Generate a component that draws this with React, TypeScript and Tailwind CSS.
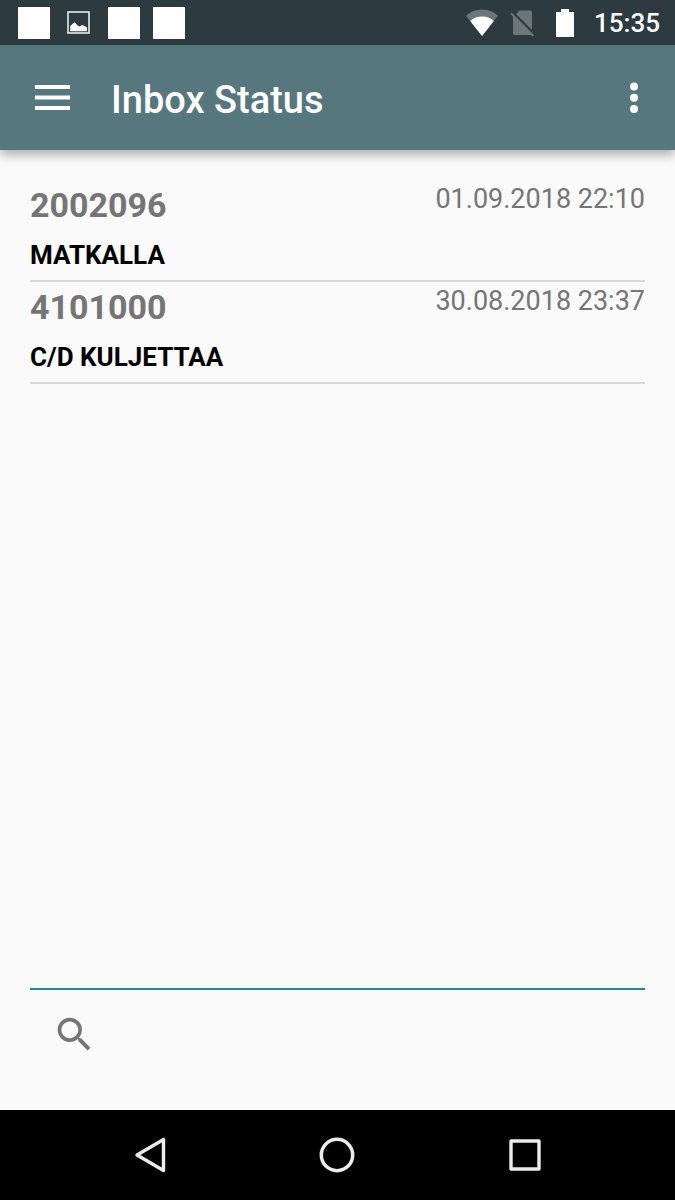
type Message = {
    id: string;
    date: string;
    status: string;
};

const messages: Message[] = [
    { id: "2002096", date: "01.09.2018 22:10", status: "MATKALLA" },
    { id: "4101000", date: "30.08.2018 23:37", status: "C/D KULJETTAA" },
];

function StatusBar() {
    return (
        <div className="flex h-[45px] items-center justify-between bg-[#2d3b40] pr-[15px] pl-[18px] text-white">
            {/* Notifications */}
            <div className="flex items-center gap-[13px]">
                <span className="size-8 bg-white" />
                <svg viewBox="0 0 32 32" className="size-8" aria-hidden="true">
                    <rect x="5" y="5" width="21" height="21" fill="none" stroke="#e8ecec" strokeWidth="1.6" />
                    <path d="M7.200 24.200v-5l2.200-2.200 2.400-1.700 3 3.400 2 .8 2.200-1.600 2.600 1 2.400 1.700v3.600z" fill="#fff" />
                </svg>
                <span className="size-8 bg-white" />
                <span className="size-8 bg-white" />
            </div>

            {/* Signal, battery and clock */}
            <div className="flex items-center">
                <svg viewBox="0 0 32 28" className="mr-3 h-7 w-8" aria-hidden="true">
                    <path d="M16 27L0 6.700C4.500 2.500 10 .5 16 .5s11.500 2 16 6.200z" fill="#6c7679" />
                    <path d="M16 27L4.200 11.900C7.500 9 11.500 7.500 16 7.500s8.500 1.500 11.800 4.400z" fill="#fff" />
                </svg>
                <svg viewBox="0 0 24 28" className="mr-[22px] h-7 w-6" aria-hidden="true">
                    <path d="M9.500 1.500h10.500a2 2 0 0 1 2 2v17.500L6.200 5z" fill="#6c7679" />
                    <path d="M.2 4.800L1.600 3.400 24 26l-1.500 1.500-1.800-1.800-.7.300H5a2 2 0 0 1-2-2V7.700z" fill="#6c7679" />
                </svg>
                <svg viewBox="0 0 18 28" className="mr-5 h-7 w-[18px]" aria-hidden="true">
                    <path d="M5 0h8v3h5v25H0V3h5z" fill="#fff" />
                </svg>
                <span className="text-[26px] leading-8 font-medium">15:35</span>
            </div>
        </div>
    );
}

function Header() {
    return (
        <header className="z-10 flex h-[105px] items-center bg-[#56777d] pr-[22px] pl-[35px] text-white shadow-[0_5px_10px_rgba(0,0,0,0.3)]">
            <button type="button" aria-label="Menu">
                <svg viewBox="0 0 36 26" className="h-[26px] w-9" fill="currentColor">
                    <path d="M0 0h35v4H0zM0 10.500h35v4H0zM0 21h35v4H0z" />
                </svg>
            </button>
            <h1 className="ml-10 flex-1 pt-1 text-[38px] leading-10 font-medium">Inbox Status</h1>
            <button type="button" aria-label="More options" className="px-3.5">
                <svg viewBox="0 0 10 32" className="h-8 w-2.5" fill="currentColor">
                    <circle cx="5" cy="4.500" r="4" />
                    <circle cx="5" cy="15.700" r="4" />
                    <circle cx="5" cy="27" r="4" />
                </svg>
            </button>
        </header>
    );
}

function NavigationBar() {
    return (
        <nav className="grid h-[90px] grid-cols-3 bg-black px-14 text-[#ececec]">
            <button type="button" aria-label="Back" className="flex items-center justify-center">
                <svg viewBox="0 0 36 36" className="size-9" fill="none" stroke="currentColor" strokeWidth="3.400" strokeLinejoin="round">
                    <path d="M31.500 2.500v31L5 18z" />
                </svg>
            </button>
            <button type="button" aria-label="Home" className="flex items-center justify-center">
                <svg viewBox="0 0 36 36" className="size-9" fill="none" stroke="currentColor" strokeWidth="3.500">
                    <circle cx="18" cy="18" r="15.700" />
                </svg>
            </button>
            <button type="button" aria-label="Recent apps" className="flex items-center justify-center">
                <svg viewBox="0 0 36 36" className="size-9" fill="none" stroke="currentColor" strokeWidth="3.400" strokeLinejoin="round">
                    <rect x="4" y="4" width="28" height="28" />
                </svg>
            </button>
        </nav>
    );
}

export default function App() {
    return (
        <div className="flex min-h-screen flex-col bg-[#fafafa] font-['Roboto',sans-serif]">
            <StatusBar />
            <Header />

            <main className="flex flex-1 flex-col px-[30px] pt-[30px]">
                {/* Messages */}
                <ul className="flex-1">
                    {messages.map((message) => (
                        <li key={message.id} className="border-b-2 border-[#d9d9d9]">
                            <div className="flex items-start justify-between text-[#757575]">
                                <h2 className="text-[34px] leading-[50px] font-bold">{message.id}</h2>
                                <time className="text-[27px] leading-[38px]">{message.date}</time>
                            </div>
                            <p className="text-[26px] leading-[50px] font-bold text-black">{message.status}</p>
                        </li>
                    ))}
                </ul>

                {/* Search */}
                <form role="search" className="flex h-[122px] items-start border-t-2 border-[#1c87a0] pt-[22px]">
                    <button type="button" aria-label="Search" className="ml-[22px] text-[#757575]">
                        <svg viewBox="0 0 24 24" className="size-[45px]" fill="currentColor">
                            <path d="M15.500 14h-.79l-.28-.27A6.471 6.471 0 0 0 16 9.500 6.500 6.500 0 1 0 9.500 16c1.610 0 3.090-.59 4.230-1.570l.27.28v.79l5 4.990L20.490 19l-4.990-5zm-6 0C7.010 14 5 11.990 5 9.500S7.010 5 9.500 5 14 7.010 14 9.500 11.990 14 9.500 14z" />
                        </svg>
                    </button>
                    <input type="text" aria-label="Search messages" className="h-11 min-w-0 flex-1 bg-transparent px-4 text-[26px] outline-none" />
                </form>
            </main>

            <NavigationBar />
        </div>
    );
}
